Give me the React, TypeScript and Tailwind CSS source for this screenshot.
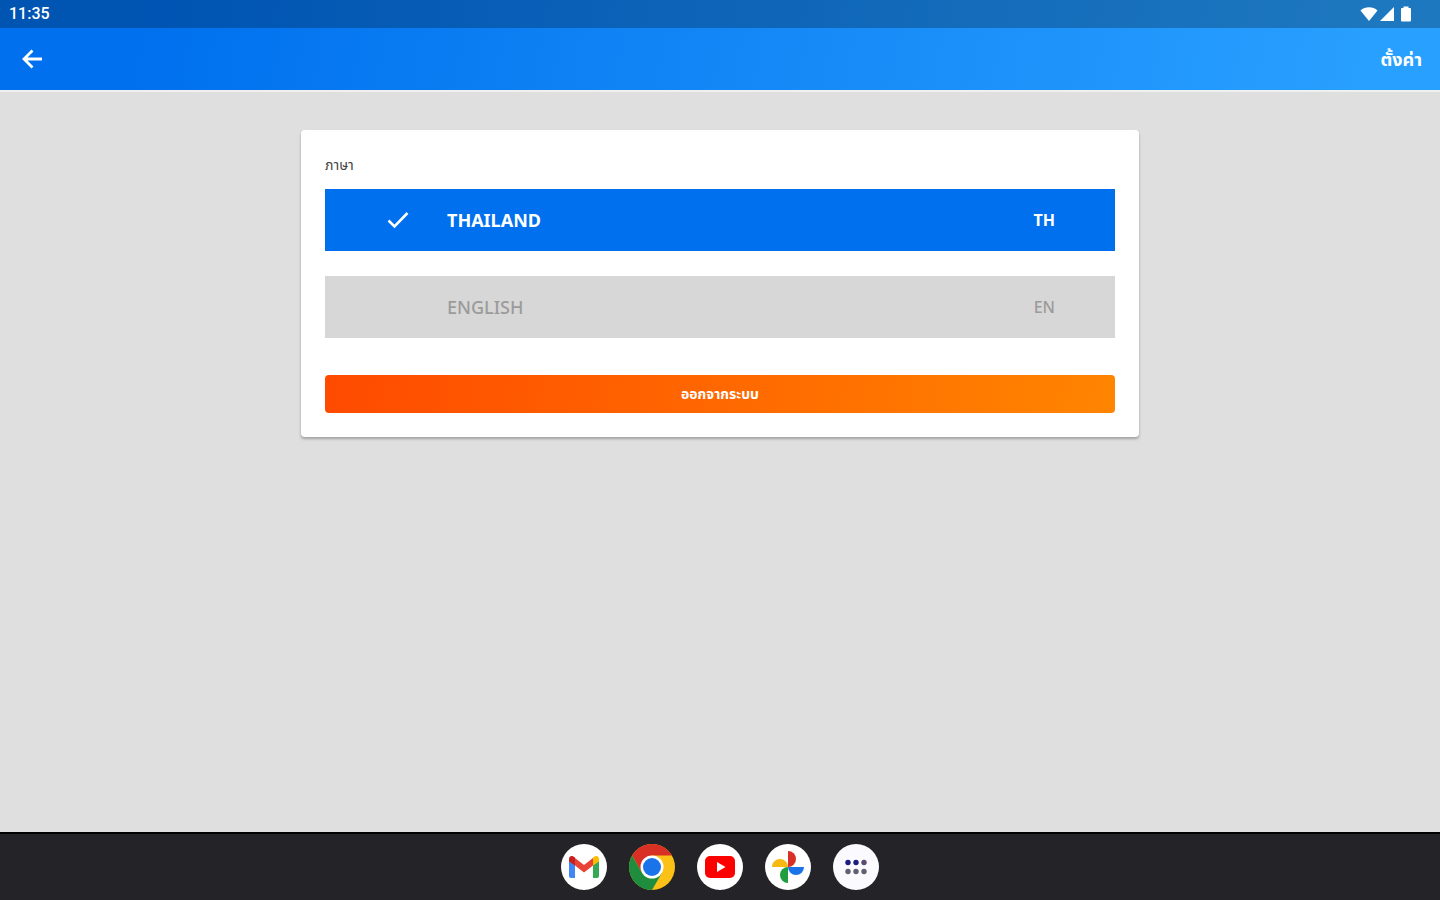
import { useState } from 'react';

const languages = [
  { code: 'TH', name: 'THAILAND' },
  { code: 'EN', name: 'ENGLISH' },
];

function StatusBar() {
  return (
    <div className="flex h-7 items-center justify-between bg-black/25 pl-[9px] pr-7 text-white">
      <span className="font-['Roboto',sans-serif] text-base font-medium leading-7">11:35</span>
      <div className="flex items-center gap-[2px]">
        <svg className="h-4 w-[18px]" viewBox="0 0 18 16" fill="currentColor" aria-hidden="true">
          <path d="M9 15 L0.5 4.6 C5 0.2 13 0.2 17.5 4.6 Z" />
        </svg>
        <svg className="h-4 w-[14px]" viewBox="0 0 14 16" fill="currentColor" aria-hidden="true">
          <path d="M14 1 V15 H0 Z" />
        </svg>
        <svg className="ml-1 h-4 w-3" viewBox="0 0 12 16" fill="currentColor" aria-hidden="true">
          <path d="M3.5 0.5 H8.5 V2 H10 Q11 2 11 3 V14.5 Q11 15.5 10 15.5 H2 Q1 15.5 1 14.5 V3 Q1 2 2 2 H3.5 Z" />
        </svg>
      </div>
    </div>
  );
}

function GmailIcon() {
  return (
    <svg className="h-[46px] w-[46px]" viewBox="0 0 46 46" aria-hidden="true">
      <circle cx="23" cy="23" r="23" fill="#ffffff" />
      <path d="M8 15 L14 19 V34 H10 Q8 34 8 32 Z" fill="#4285f4" />
      <path d="M32 19 L38 15 V32 Q38 34 36 34 H32 Z" fill="#34a853" />
      <path d="M14 14 L23 21 L32 14 V21.5 L23 28.5 L14 21.5 Z" fill="#ea4335" />
      <path d="M8 15 C8 11.5 11.5 11 14 13.5 V21.5 L8 17.5 Z" fill="#c5221f" />
      <path d="M38 15 C38 11.5 34.5 11 32 13.5 V21.5 L38 17.5 Z" fill="#fbbc04" />
    </svg>
  );
}

function ChromeIcon() {
  return (
    <svg className="h-[46px] w-[46px]" viewBox="0 0 46 46" aria-hidden="true">
      <circle cx="23" cy="23" r="23" fill="#fbc116" />
      <path d="M3.1 11.5 A23 23 0 0 1 42.9 11.5 H23 L13 28.7 Z" fill="#d93025" />
      <path d="M3.1 11.5 A23 23 0 0 0 23 46 L33 28.7 L23 34.5 L13 28.7 Z" fill="#1e8e3e" />
      <circle cx="23" cy="23" r="11.5" fill="#ffffff" />
      <circle cx="23" cy="23" r="9" fill="#1a73e8" />
    </svg>
  );
}

function YoutubeIcon() {
  return (
    <svg className="h-[46px] w-[46px]" viewBox="0 0 46 46" aria-hidden="true">
      <circle cx="23" cy="23" r="23" fill="#ffffff" />
      <rect x="8" y="12" width="30" height="22" rx="5" fill="#ff0000" />
      <path d="M20 18 L28.5 23 L20 28 Z" fill="#ffffff" />
    </svg>
  );
}

function PhotosIcon() {
  return (
    <svg className="h-[46px] w-[46px]" viewBox="0 0 46 46" aria-hidden="true">
      <circle cx="23" cy="23" r="23" fill="#ffffff" />
      <path d="M23 7 A8 8 0 0 1 23 23 Z" fill="#d93025" />
      <path d="M39 23 A8 8 0 0 1 23 23 Z" fill="#1a73e8" />
      <path d="M23 39 A8 8 0 0 1 23 23 Z" fill="#1e9e3e" />
      <path d="M7 23 A8 8 0 0 1 23 23 Z" fill="#f5b912" />
    </svg>
  );
}

function AppsIcon() {
  return (
    <svg className="h-[46px] w-[46px]" viewBox="0 0 46 46" aria-hidden="true">
      <circle cx="23" cy="23" r="23" fill="#fbfaff" />
      <g fill="#1c1c80">
        <circle cx="15" cy="18.5" r="2.7" />
        <circle cx="23" cy="18.5" r="2.7" />
      </g>
      <circle cx="31" cy="18.5" r="2.7" fill="#5c4a70" />
      <g fill="#5f6070">
        <circle cx="15" cy="27.5" r="2.7" />
        <circle cx="23" cy="27.5" r="2.7" />
        <circle cx="31" cy="27.5" r="2.7" />
      </g>
    </svg>
  );
}

const apps = [
  { name: 'Gmail', Icon: GmailIcon },
  { name: 'Chrome', Icon: ChromeIcon },
  { name: 'YouTube', Icon: YoutubeIcon },
  { name: 'Photos', Icon: PhotosIcon },
  { name: 'All apps', Icon: AppsIcon },
];

export default function App() {
  const [language, setLanguage] = useState('TH');

  return (
    <div className="flex min-h-screen flex-col bg-[#dfdfdf] font-['Noto_Sans','Noto_Sans_Thai',sans-serif]">
      <header className="border-b-2 border-[#f0f0ee] bg-linear-[100deg] from-[#0070ee] from-10% to-[#28a0ff] to-95%">
        <StatusBar />
        <div className="flex h-[62px] items-center justify-between pl-5 pr-[18px] text-white">
          <button type="button" aria-label="Back">
            <svg className="h-6 w-6" viewBox="0 0 24 24" fill="none" stroke="currentColor" strokeWidth="2.8" aria-hidden="true">
              <path d="M22 12 H5 M12.5 3.5 L4 12 L12.5 20.5" />
            </svg>
          </button>
          <h1 className="text-lg font-bold leading-6">ตั้งค่า</h1>
        </div>
      </header>

      <main className="flex-1 px-6 pt-[38px]">
        <div className="mx-auto w-full max-w-[838px] rounded-sm bg-white p-6 shadow-[0_2px_3px_rgba(0,0,0,0.28)]">
          <fieldset>
            <legend className="mb-[13px] text-sm leading-[22px] text-[#444444]">ภาษา</legend>
            <div className="flex flex-col gap-[25px]">
              {languages.map(({ code, name }) => {
                const selected = code === language;
                return (
                  <label
                    key={code}
                    className={`flex h-[62px] cursor-pointer items-center px-[60px] ${
                      selected ? 'bg-[#0070ee] font-bold text-white' : 'bg-[#d7d7d7] font-medium text-[#9b9b9b]'
                    }`}
                  >
                    <input
                      type="radio"
                      name="language"
                      value={code}
                      checked={selected}
                      onChange={() => setLanguage(code)}
                      className="sr-only"
                    />
                    <span className="mr-[38px] h-6 w-6">
                      {selected && (
                        <svg className="h-6 w-6" viewBox="0 0 24 24" fill="none" stroke="currentColor" strokeWidth="2.6" aria-hidden="true">
                          <path d="M3.5 12.5 L9.5 18.5 L22.5 5" />
                        </svg>
                      )}
                    </span>
                    <span className="flex-1 text-lg leading-6">{name}</span>
                    <span className="text-base leading-6">{code}</span>
                  </label>
                );
              })}
            </div>
          </fieldset>

          <button
            type="button"
            className="mt-[37px] block h-[38px] w-full rounded bg-linear-[100deg] from-[#ff4a00] to-[#ff8500] text-sm font-bold text-white"
          >
            ออกจากระบบ
          </button>
        </div>
      </main>

      <nav className="flex h-[68px] items-center justify-center gap-[22px] border-t-2 border-black bg-[#242428]">
        {apps.map(({ name, Icon }) => (
          <button key={name} type="button" aria-label={name} className="rounded-full">
            <Icon />
          </button>
        ))}
      </nav>
    </div>
  );
}
